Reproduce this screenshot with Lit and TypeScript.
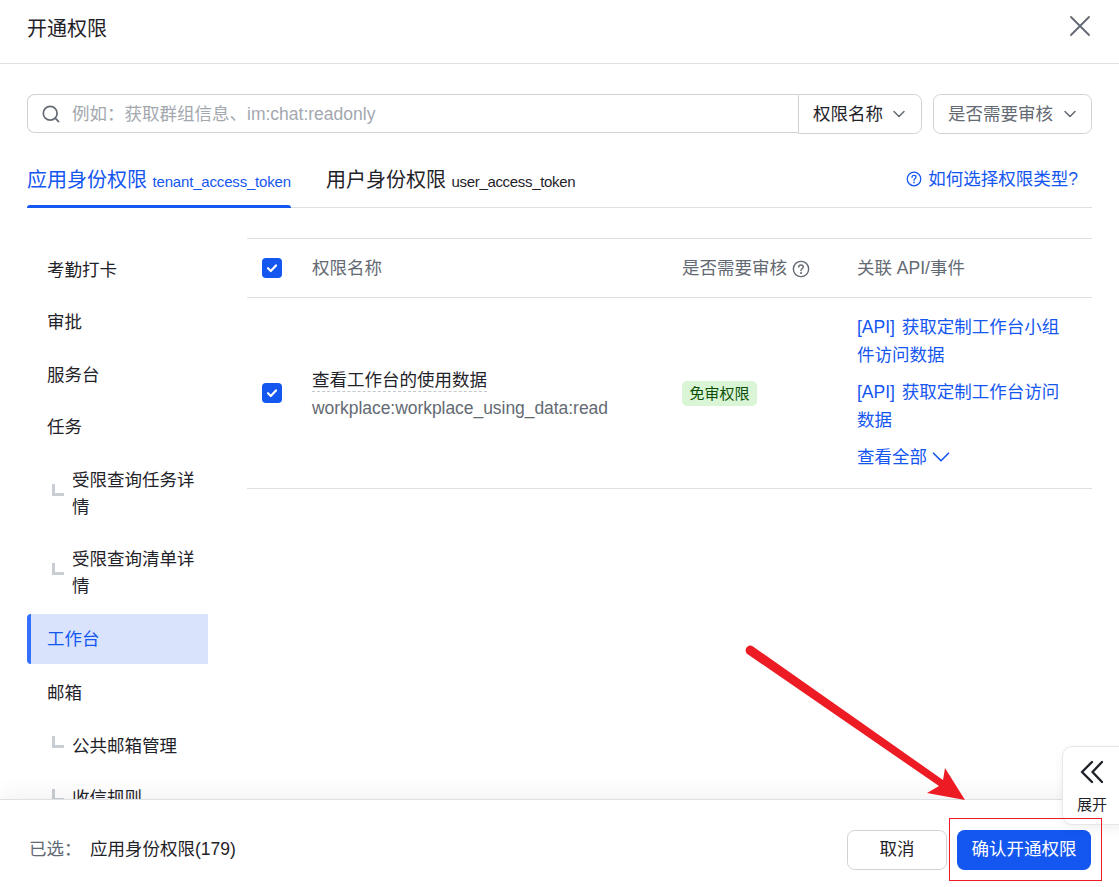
import { LitElement, html, css, svg } from "lit";
import { customElement } from "lit/decorators.js";

const chevron = (size: number, sw = 1.5) => html`<svg class="chev" width=${size} height=${size} viewBox="0 0 16 16" fill="none" stroke="currentColor" stroke-width=${sw} stroke-linecap="round" stroke-linejoin="round"><path d="M3 5.5 8 10.5 13 5.5"/></svg>`;
const help = (size: number) => html`<svg width=${size} height=${size} viewBox="0 0 16 16" fill="none" stroke="currentColor" stroke-width="1.25" stroke-linecap="round" stroke-linejoin="round"><circle cx="8" cy="8" r="6.8"/><path d="M6 6.3C6 5.1 6.9 4.4 8 4.4s2 .8 2 1.8c0 1.6-2 1.6-2 3.1"/><path d="M8 11.3v.4" stroke-width="1.5"/></svg>`;
const check = html`<span class="cb"><svg width="14" height="14" viewBox="0 0 14 14" fill="none" stroke="#fff" stroke-width="2.2" stroke-linecap="round" stroke-linejoin="round"><path d="M3 7.2 5.8 10 11 4.4"/></svg></span>`;

const nav: { t: string; sub?: boolean; active?: boolean }[] = [
  { t: "考勤打卡" },
  { t: "审批" },
  { t: "服务台" },
  { t: "任务" },
  { t: "受限查询任务详情", sub: true },
  { t: "受限查询清单详情", sub: true },
  { t: "工作台", active: true },
  { t: "邮箱" },
  { t: "公共邮箱管理", sub: true },
  { t: "收信规则", sub: true },
];

@customElement("app-root")
export class AppRoot extends LitElement {
  static styles = css`
    :host {
      display: flex;
      flex-direction: column;
      position: relative;
      width: 1119px;
      height: 887px;
      overflow: hidden;
      background: #fff;
      color: #1f2329;
      font-family: "Liberation Sans", "Noto Sans CJK SC", sans-serif;
      font-size: 17.5px;
      line-height: 27px;
    }
    .head {
      flex: none;
      height: 64px;
      box-sizing: border-box;
      border-bottom: 1px solid #dee0e3;
      display: flex;
      align-items: center;
      justify-content: space-between;
      padding: 0 28px 7px 27px;
      font-size: 20px;
    }
    .title { margin-top: 2px; }
    .close { display: block; color: #646a73; margin-bottom: 4px; }
    .main {
      flex: 1;
      min-height: 0;
      overflow: hidden;
      padding: 30px 27px 0 27px;
      display: flex;
      flex-direction: column;
    }
    .filters { display: flex; gap: 11px; align-items: flex-start; flex: none; }
    .group { display: flex; align-items: flex-start; }
    .search {
      width: 771px;
      height: 39px;
      box-sizing: border-box;
      border: 1px solid #d0d3d6;
      border-right: none;
      border-radius: 7.5px 0 0 7.5px;
      display: flex;
      align-items: center;
      padding-left: 13px;
      gap: 11px;
      color: #646a73;
    }
    .ph { color: #a3a8af; padding-top: 2px; }
    .sel {
      height: 40px;
      box-sizing: border-box;
      border: 1px solid #d0d3d6;
      border-radius: 0 7.5px 7.5px 0;
      display: flex;
      align-items: center;
      justify-content: space-between;
      white-space: nowrap;
      padding: 0 14px 0 14px;
    }
    .sel .chev { color: #646a73; }
    .sel.name { width: 124px; }
    .sel.audit {
      width: 159px;
      border-radius: 7.5px;
      color: #646a73;
      padding-right: 13px;
    }
    .tabs {
      flex: none;
      margin-top: 27px;
      height: 47px;
      box-sizing: border-box;
      border-bottom: 1px solid #dee0e3;
      display: flex;
      gap: 35px;
    }
    .tab {
      position: relative;
      font-size: 20px;
      line-height: 38px;
      white-space: nowrap;
    }
    .tab small { font-size: 15px; letter-spacing: -0.32px; }
    .tab.on small { letter-spacing: -0.18px; }
    .tab.on { color: #1456f0; }
    .tab.on::after {
      content: "";
      position: absolute;
      left: 0;
      right: 0;
      bottom: -1px;
      height: 3.5px;
      background: #1456f0;
      border-radius: 3px 3px 0 0;
    }
    .how {
      margin-left: auto;
      display: flex;
      align-items: center;
      gap: 6px;
      color: #1456f0;
      height: 36px;
      padding-right: 14px;
    }
    .content { flex: none; display: flex; gap: 39px; margin-top: 30px; }
    .side { width: 181px; flex: none; padding-top: 7px; display: flex; flex-direction: column; gap: 2.5px; }
    .item { padding: 11.5px 0 11.5px 20px; display: flex; align-items: center; }
    .item.sub { padding-left: 25px; padding-right: 12px; }
    .elbow {
      flex: none;
      width: 12px;
      height: 12px;
      box-sizing: border-box;
      border-left: 3px solid #c9cdd4;
      border-bottom: 3px solid #c9cdd4;
      margin: 0 8px 8px 0;
    }
    .item.on {
      background: #d9e4fc;
      color: #1456f0;
      border-left: 4px solid #3370ff;
      padding-left: 16px;
      border-radius: 4px 0 0 4px;
      margin-bottom: 2px;
    }
    .table { flex: 1; min-width: 0; }
    .row {
      display: grid;
      grid-template-columns: 65px 370px 175px 1fr;
      align-items: center;
      border-bottom: 1px solid #dee0e3;
    }
    .row.top { border-top: 1px solid #dee0e3; height: 60px; box-sizing: border-box; color: #646a73; }
    .row.top > .lbl { padding-top: 1px; }
    .row.body { height: 191px; box-sizing: border-box; }
    .cb {
      margin-left: 15px;
      width: 20px;
      height: 20px;
      border-radius: 4px;
      background: #1456f0;
      display: flex;
      align-items: center;
      justify-content: center;
    }
    .th-help { display: flex; align-items: center; gap: 5px; }
    .pinfo { padding-top: 2px; }
    .pname { padding-top: 1px; margin-bottom: 1px; }
    .pname span { border-bottom: 1px dashed #c4c7cc; line-height: 22px; display: inline-block; }
    .pcode { color: #646a73; line-height: 27px; letter-spacing: -0.05px; }
    .tag {
      display: inline-block;
      font-size: 15px;
      line-height: 25px;
      padding: 0 7.5px;
      border-radius: 5px;
      background: #d9f5d6;
      color: #0b4f05;
    }
    .links { color: #1456f0; padding: 0 20px 2px 0; line-height: 28.5px; display: flex; flex-direction: column; gap: 8px; word-spacing: 2px; }
    .more { display: flex; align-items: center; gap: 2px; }
    .foot {
      flex: none;
      position: relative;
      z-index: 1;
      height: 88px;
      box-sizing: border-box;
      border-top: 1px solid #dee0e3;
      background: #fff;
      box-shadow: 0 -6px 20px rgba(0, 0, 0, 0.05);
      display: flex;
      align-items: center;
      padding: 12px 28px 0 29px;
    }
    .sel-label { color: #646a73; width: 61px; }
    .btns { margin-left: auto; display: flex; gap: 10px; }
    .btn {
      height: 40px;
      box-sizing: border-box;
      border-radius: 7.5px;
      display: flex;
      align-items: center;
      justify-content: center;
    }
    .btn.cancel { width: 100px; border: 1px solid #d0d3d6; }
    .btn.ok { width: 134px; background: #1456f0; color: #fff; }
    .expand {
      position: absolute;
      z-index: 2;
      left: 1062px;
      top: 746px;
      width: 70px;
      height: 79px;
      box-sizing: border-box;
      border: 1px solid #e4e6e9;
      border-radius: 10px;
      background: #fff;
      box-shadow: 0 4px 12px rgba(0, 0, 0, 0.06);
      font-size: 15px;
      line-height: 20px;
    }
    .expand svg { position: absolute; left: 14px; top: 11px; }
    .expand span { position: absolute; left: 14px; top: 48px; }
    .mark { position: absolute; inset: 0; z-index: 3; pointer-events: none; }
    .box {
      position: absolute;
      z-index: 3;
      left: 949px;
      top: 818px;
      width: 153px;
      height: 63px;
      box-sizing: border-box;
      border: 1px solid #ed1c24;
      pointer-events: none;
    }
  `;

  render() {
    return html`
      <div class="head">
        <span class="title">开通权限</span>
        <svg class="close" width="22" height="22" viewBox="0 0 22 22" fill="none" stroke="currentColor" stroke-width="1.9" stroke-linecap="round"><path d="M2 2l18 18M20 2 2 20"/></svg>
      </div>
      <div class="main">
        <div class="filters">
          <div class="group">
            <div class="search">
              <svg width="20" height="20" viewBox="0 0 20 20" fill="none" stroke="currentColor" stroke-width="1.7" stroke-linecap="round"><circle cx="9.2" cy="9.2" r="6.9"/><path d="M14.2 14.2 17.6 17.6"/></svg>
              <span class="ph">例如：获取群组信息、im:chat:readonly</span>
            </div>
            <div class="sel name"><span>权限名称</span>${chevron(16)}</div>
          </div>
          <div class="sel audit"><span>是否需要审核</span>${chevron(16)}</div>
        </div>
        <div class="tabs">
          <div class="tab on">应用身份权限 <small>tenant_access_token</small></div>
          <div class="tab">用户身份权限 <small>user_access_token</small></div>
          <div class="how">${help(16)}<span>如何选择权限类型?</span></div>
        </div>
        <div class="content">
          <div class="side">
            ${nav.map(
              (n) => html`<div class="item ${n.sub ? "sub" : ""} ${n.active ? "on" : ""}">
                ${n.sub ? html`<i class="elbow"></i>` : ""}<span>${n.t}</span>
              </div>`
            )}
          </div>
          <div class="table">
            <div class="row top">
              ${check}
              <span class="lbl">权限名称</span>
              <span class="th-help lbl">是否需要审核 ${help(18)}</span>
              <span class="lbl">关联 API/事件</span>
            </div>
            <div class="row body">
              ${check}
              <div class="pinfo">
                <div class="pname"><span>查看工作台的使用数据</span></div>
                <div class="pcode">workplace:workplace_using_data:read</div>
              </div>
              <div><span class="tag">免审权限</span></div>
              <div class="links">
                <div>[API] 获取定制工作台小组件访问数据</div>
                <div>[API] 获取定制工作台访问数据</div>
                <div class="more">查看全部 ${chevron(24, 1.1)}</div>
              </div>
            </div>
          </div>
        </div>
      </div>
      <div class="foot">
        <span class="sel-label">已选：</span>
        <span>应用身份权限(179)</span>
        <div class="btns">
          <div class="btn cancel">取消</div>
          <div class="btn ok">确认开通权限</div>
        </div>
      </div>
      <div class="expand">
        <svg width="26" height="28" viewBox="0 0 26 28" fill="none" stroke="#1f2329" stroke-width="2.4" stroke-linecap="round" stroke-linejoin="round"><path d="M15 4 5 14l10 10M25 4 15.5 14 25 24"/></svg>
        <span>展开</span>
      </div>
      <svg class="mark" width="1119" height="887" viewBox="0 0 1119 887">
        ${svg`<path fill="#ed1c24" d="M752.6 646.2 943 780 945 768 965 800 927 793 939 786 747.3 654C743 650 748 643.500 752.6 646.2Z"/>`}
      </svg>
      <div class="box"></div>
    `;
  }
}
